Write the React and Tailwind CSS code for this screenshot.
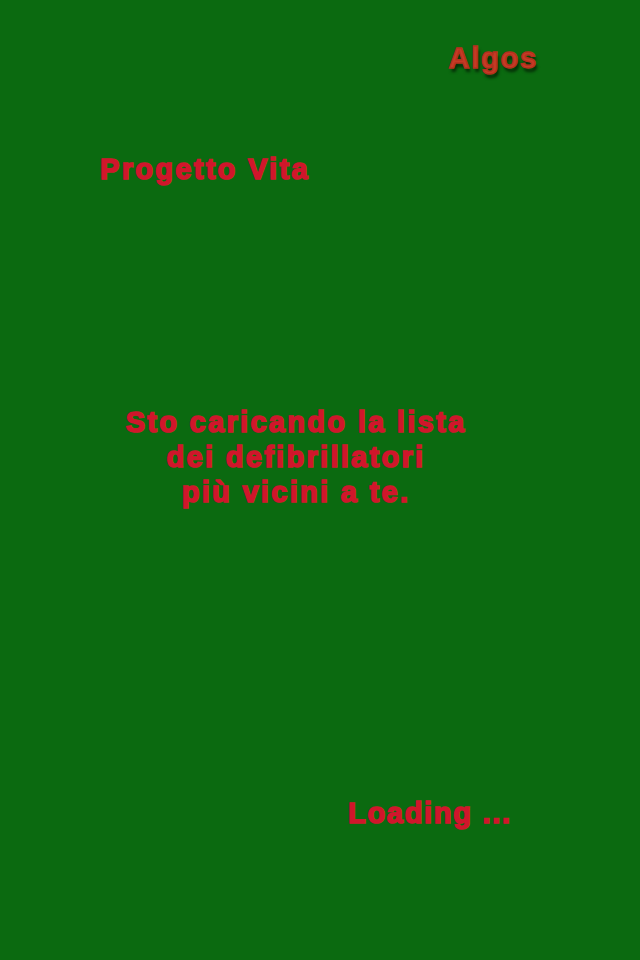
export default function App() {
  const base =
    "font-['Liberation_Sans',Arial,sans-serif] font-bold text-[29px] leading-none text-[#d0162b] [-webkit-text-stroke:1.6px_#d0162b]"
  const heavy = base + " tracking-[2.3px]"

  return (
    <div className="w-[640px] h-[960px] bg-[#0b6a10] flex flex-col">
      {/* brand */}
      <div className="flex justify-end pr-[102px] pt-[44px]">
        <span
          className="font-['Liberation_Sans',Arial,sans-serif] font-bold text-[29px] leading-none tracking-[1.8px] text-[#c53b25] [-webkit-text-stroke:1.4px_#b5301e] [text-shadow:2px_4px_3px_rgba(0,0,0,0.6)]"
        >
          Algos
        </span>
      </div>

      {/* title */}
      <div className="pl-[100px] mt-[82px]">
        <span className={heavy}>Progetto Vita</span>
      </div>

      {/* message */}
      <div className="mt-[223px] w-[592px] flex flex-col items-center gap-[6px]">
        <span className={heavy}>Sto caricando la lista</span>
        <span className={heavy}>dei defibrillatori</span>
        <span className={heavy}>più vicini a te.</span>
      </div>

      {/* status */}
      <div className="mt-[292px] pl-[348px]">
        <span className={base + " tracking-[1.7px]"}>Loading ...</span>
      </div>
    </div>
  )
}
